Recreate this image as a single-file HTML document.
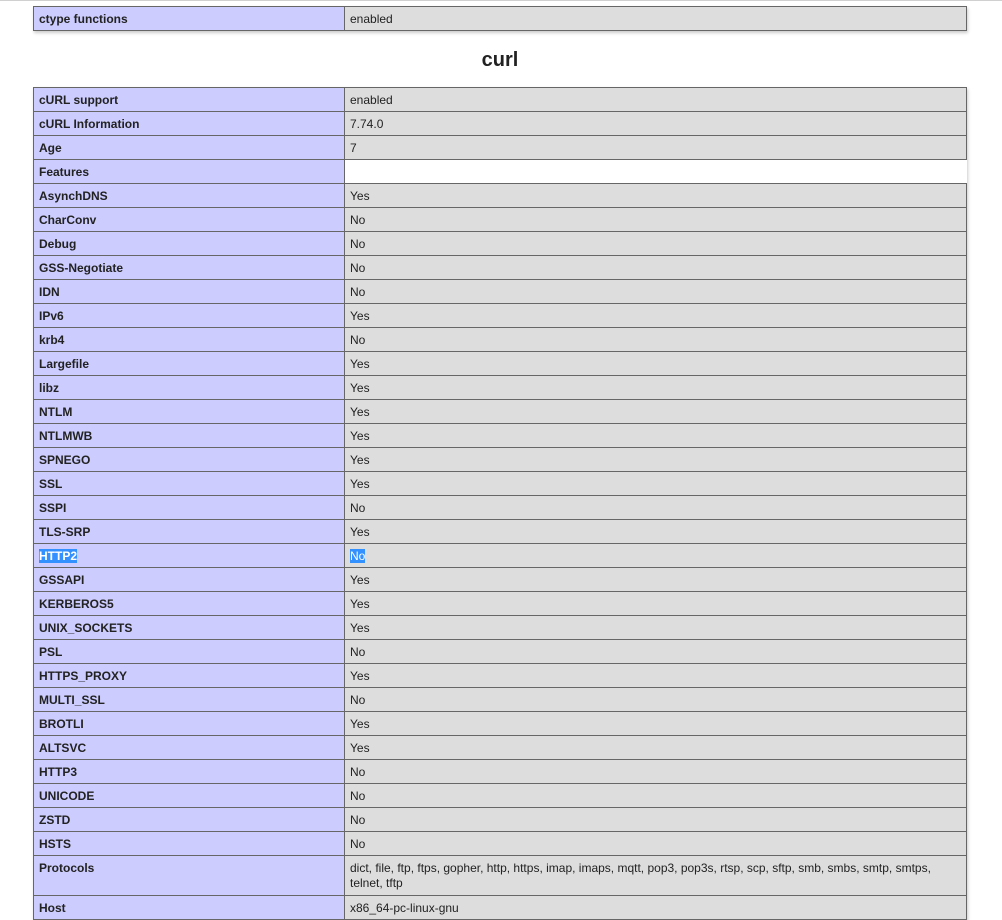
<!DOCTYPE html>
<html><head><style>
body{margin:0;background:#fff;width:1002px;height:906px;overflow:hidden;position:relative;font-family:"Liberation Sans",Arial,sans-serif;font-size:12px;color:#222}
.topline{position:absolute;left:0;top:0;width:1002px;height:1px;background:#d0d0d0}
table{position:absolute;left:33px;border-collapse:collapse;width:934px;box-shadow:1px 2px 3px #ccc}
td{border:1px solid #666;padding:5px 5px 3px;line-height:15px;height:15px;vertical-align:baseline}
td.e{background:#ccf;width:300px;font-weight:bold}
td.v{background:#ddd}
td.w{background:#fff;border-right:none}
h2{position:absolute;left:33px;width:934px;top:47px;margin:0;text-align:center;font-size:20px;line-height:26px;font-weight:bold}
.sel{background:#3390ff;color:#fff}
</style></head><body>
<div class="topline"></div>
<table style="top:6px"><tr><td class="e">ctype functions</td><td class="v">enabled</td></tr></table>
<h2>curl</h2>
<table style="top:87px">
<tr><td class="e">cURL support</td><td class="v">enabled</td></tr>
<tr><td class="e">cURL Information</td><td class="v">7.74.0</td></tr>
<tr><td class="e">Age</td><td class="v">7</td></tr>
<tr><td class="e">Features</td><td class="w"></td></tr>
<tr><td class="e">AsynchDNS</td><td class="v">Yes</td></tr>
<tr><td class="e">CharConv</td><td class="v">No</td></tr>
<tr><td class="e">Debug</td><td class="v">No</td></tr>
<tr><td class="e">GSS-Negotiate</td><td class="v">No</td></tr>
<tr><td class="e">IDN</td><td class="v">No</td></tr>
<tr><td class="e">IPv6</td><td class="v">Yes</td></tr>
<tr><td class="e">krb4</td><td class="v">No</td></tr>
<tr><td class="e">Largefile</td><td class="v">Yes</td></tr>
<tr><td class="e">libz</td><td class="v">Yes</td></tr>
<tr><td class="e">NTLM</td><td class="v">Yes</td></tr>
<tr><td class="e">NTLMWB</td><td class="v">Yes</td></tr>
<tr><td class="e">SPNEGO</td><td class="v">Yes</td></tr>
<tr><td class="e">SSL</td><td class="v">Yes</td></tr>
<tr><td class="e">SSPI</td><td class="v">No</td></tr>
<tr><td class="e">TLS-SRP</td><td class="v">Yes</td></tr>
<tr><td class="e"><span class="sel">HTTP2</span></td><td class="v"><span class="sel">No</span></td></tr>
<tr><td class="e">GSSAPI</td><td class="v">Yes</td></tr>
<tr><td class="e">KERBEROS5</td><td class="v">Yes</td></tr>
<tr><td class="e">UNIX_SOCKETS</td><td class="v">Yes</td></tr>
<tr><td class="e">PSL</td><td class="v">No</td></tr>
<tr><td class="e">HTTPS_PROXY</td><td class="v">Yes</td></tr>
<tr><td class="e">MULTI_SSL</td><td class="v">No</td></tr>
<tr><td class="e">BROTLI</td><td class="v">Yes</td></tr>
<tr><td class="e">ALTSVC</td><td class="v">Yes</td></tr>
<tr><td class="e">HTTP3</td><td class="v">No</td></tr>
<tr><td class="e">UNICODE</td><td class="v">No</td></tr>
<tr><td class="e">ZSTD</td><td class="v">No</td></tr>
<tr><td class="e">HSTS</td><td class="v">No</td></tr>
<tr><td class="e" style="line-height:15px;height:31px">Protocols</td><td class="v" style="line-height:15px;height:31px">dict, file, ftp, ftps, gopher, http, https, imap, imaps, mqtt, pop3, pop3s, rtsp, scp, sftp, smb, smbs, smtp, smtps, telnet, tftp</td></tr>
<tr><td class="e">Host</td><td class="v">x86_64-pc-linux-gnu</td></tr>
</table>
</body></html>
